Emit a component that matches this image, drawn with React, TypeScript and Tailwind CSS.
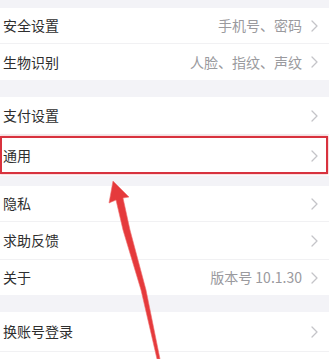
import React from "react";

const Chevron = () => (
  <svg width="7" height="12" viewBox="0 0 7 12" className="shrink-0">
    <path d="M1 1 L6 6 L1 11" fill="none" stroke="#c4c4c8" strokeWidth="1.3" strokeLinecap="round" strokeLinejoin="round" />
  </svg>
);

type RowProps = { label: string; value?: string; h: string; border?: boolean; children?: React.ReactNode };

const Row = ({ label, value, h, border = true, children }: RowProps) => (
  <div className={`relative flex items-center justify-between bg-white pl-[3px] pr-[11px] ${h} ${border ? "border-b border-[#f1f1f3]" : ""}`}>
    <span className="text-[14px] text-[#2e2e2e]">{label}</span>
    <div className="flex items-center gap-[9px]">
      {value && <span className="text-[14px] text-[#9a9a9e]">{value}</span>}
      <Chevron />
    </div>
    {children}
  </div>
);

export default function App() {
  return (
    <div
      className="relative w-[329px] h-[359px] overflow-hidden bg-[#f3f3f7]"
      style={{ fontFamily: '"Noto Sans CJK SC", "Noto Sans", sans-serif' }}
    >
      <div className="h-[8px]" />
      <Row label="安全设置" value="手机号、密码" h="h-[36px]" />
      <Row label="生物识别" value="人脸、指纹、声纹" h="h-[36px]" border={false} />
      <div className="h-[17px]" />
      <Row label="支付设置" h="h-[38px]" />
      <Row label="通用" h="h-[41px]" border={false}>
        <div className="absolute left-0 right-[1px] top-[1px] bottom-[2px] border-2 border-[#d8323e] shadow-[0_0_2px_rgba(230,80,90,0.6)]" />
      </Row>
      <div className="h-[10px]" />
      <Row label="隐私" h="h-[36px]" />
      <Row label="求助反馈" h="h-[38px]" />
      <Row label="关于" value="版本号 10.1.30" h="h-[35px]" border={false} />
      <div className="h-[17px]" />
      <Row label="换账号登录" h="h-[40px]" />
      <div className="h-[7px] bg-white" />

      <svg className="absolute left-0 top-0" width="329" height="359" viewBox="0 0 329 359">
        <polygon
          points="113,181 109,203 116,200 123,230 141,290 157,359 160,359 146,290 130,230 123,198 129,197"
          fill="#e53a3c"
          stroke="#f07070"
          strokeWidth="0.6"
          strokeLinejoin="round"
        />
      </svg>
    </div>
  );
}
